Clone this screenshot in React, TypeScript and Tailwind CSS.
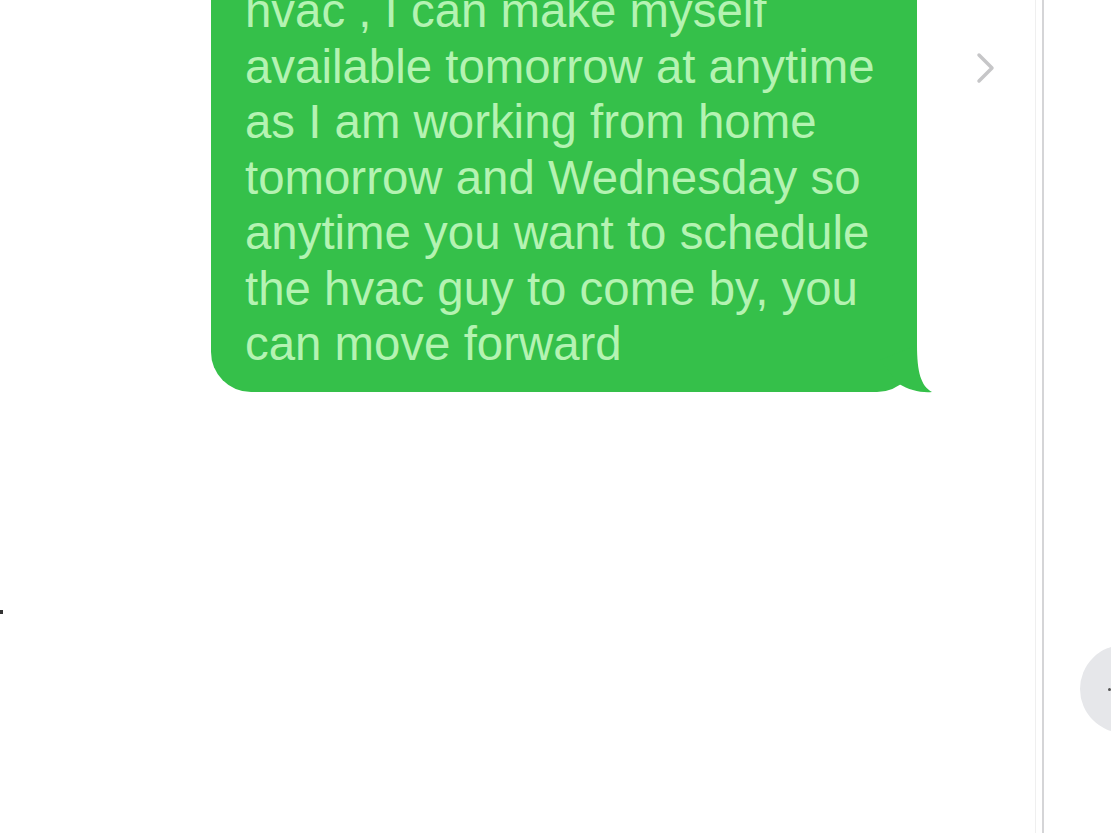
import React from 'react';

const lines = [
  'hvac , I can make myself',
  'available tomorrow at anytime',
  'as I am working from home',
  'tomorrow and Wednesday so',
  'anytime you want to schedule',
  'the hvac guy to come by, you',
  'can move forward',
];

const MessageBubble: React.FC = () => (
  <div className="relative w-[706px] mt-[-76px] pt-[59px] pb-[20px] px-[34px] bg-[#35c04a] rounded-tl-[40px] rounded-tr-[40px] rounded-bl-[40px] rounded-br-[40px]">
    {lines.map((line) => (
      <div key={line} className="whitespace-nowrap text-[47.4px] leading-[55.5px] text-[#b4f3b2]">
        {line}
      </div>
    ))}
    {/* tail */}
    <svg
      className="absolute right-[-15px] bottom-0 w-[60px] h-[50px] overflow-visible"
      viewBox="0 0 60 50"
    >
      <path d="M45 3 C45 30 49 44 60 50 C49 51 37 48 27 42 L8 18 Z" fill="#35c04a" />
    </svg>
  </div>
);

export default function App() {
  return (
    <div
      className="relative flex w-[1111px] h-[833px] overflow-hidden bg-white"
      style={{ fontFamily: '"Liberation Sans", Arial, sans-serif' }}
    >
      <div className="relative flex-none w-[1035px] h-full">
        <div className="flex items-start pl-[211px]">
          <MessageBubble />
          <svg className="ml-[59px] mt-[52px] w-[20px] h-[32px]" viewBox="0 0 20 32">
            <path d="M3 3 L16 16 L3 29" fill="none" stroke="#c6c6c8" strokeWidth="3.5" strokeLinecap="round" strokeLinejoin="round" />
          </svg>
        </div>
        {/* stray mark at left edge */}
        <div className="absolute left-0 top-[610px] w-[3px] h-[4px] bg-[#333]" />
      </div>
      <div className="flex-none w-px h-full bg-[#efefef]" />
      <div className="flex-none ml-[6px] w-[2px] h-full bg-[#d5d5d7]" />
      <div className="relative flex-1 h-full">
        <div className="absolute left-[36px] top-[645px] w-[88px] h-[88px] rounded-full bg-[#e6e7ea] flex items-center pl-[28px]">
          <div className="w-[3px] h-[3px] rounded-full bg-[#555]" />
        </div>
      </div>
    </div>
  );
}
